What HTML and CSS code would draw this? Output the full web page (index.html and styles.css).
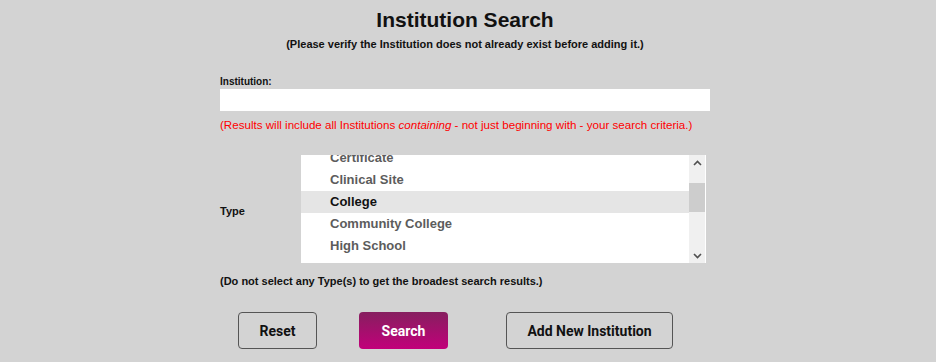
FILE: index.html
```html
<!DOCTYPE html>
<html lang="en">
<head>
    <meta charset="UTF-8">
    <meta name="viewport" content="width=device-width, initial-scale=1.0">
    <title>Institution Search</title>
    <link rel="stylesheet" href="styles.css">
</head>
<body>
    <div class="search-page">
        <h1 class="title">Institution Search</h1>
        <div class="subtitle">(Please verify the Institution does not already exist before adding it.)</div>

        <form id="searchForm">
            <label class="field-label" for="institution">Institution:</label>
            <input class="text-input" id="institution" type="text">
            <div class="hint-red">(Results will include all Institutions <i>containing</i> - not just beginning with - your search criteria.)</div>

            <div class="type-row">
                <div class="type-label">Type</div>
                <div class="listbox">
                    <div class="list-view" id="typeList">
                        <div class="option">Associate</div>
                        <div class="option">Business School</div>
                        <div class="option">Certificate</div>
                        <div class="option">Clinical Site</div>
                        <div class="option selected">College</div>
                        <div class="option">Community College</div>
                        <div class="option">High School</div>
                        <div class="option">Junior College</div>
                        <div class="option">Medical School</div>
                        <div class="option">Other</div>
                        <div class="option">Technical School</div>
                        <div class="option">University</div>
                        <div class="option">Vocational School</div>
                    </div>
                    <div class="scrollbar">
                        <div class="scroll-btn">
                            <svg width="9" height="6" viewBox="0 0 9 6"><path d="M1 5 L4.5 1.5 L8 5" fill="none" stroke="#505050" stroke-width="1.6"/></svg>
                        </div>
                        <div class="scroll-track">
                            <div class="scroll-thumb"></div>
                        </div>
                        <div class="scroll-btn">
                            <svg width="9" height="6" viewBox="0 0 9 6"><path d="M1 1 L4.5 4.5 L8 1" fill="none" stroke="#505050" stroke-width="1.6"/></svg>
                        </div>
                    </div>
                </div>
            </div>
            <div class="hint">(Do not select any Type(s) to get the broadest search results.)</div>

            <div class="buttons">
                <button class="btn btn-reset" type="reset">Reset</button>
                <button class="btn btn-search" type="submit">Search</button>
                <button class="btn btn-add" type="button">Add New Institution</button>
            </div>
        </form>
    </div>
    <script src="script.js"></script>
</body>
</html>
```

FILE: styles.css
```css
body {
    margin: 0;
    padding-right: 6px;
    background: #d3d3d3;
    font-family: "Liberation Sans", Arial, sans-serif;
    color: #111;
}

.search-page {
    width: 490px;
    margin: 0 auto;
}

.title {
    margin: 0;
    padding-top: 8px;
    font-size: 21px;
    line-height: 24px;
    text-align: center;
}

.subtitle {
    margin-top: 5px;
    font-size: 11px;
    font-weight: bold;
    line-height: 14px;
    text-align: center;
}

.field-label {
    display: block;
    margin-top: 24px;
    font-size: 10px;
    font-weight: bold;
    line-height: 14px;
}

.text-input {
    display: block;
    box-sizing: border-box;
    width: 490px;
    height: 22px;
    border: none;
    background: #fff;
}

.text-input:focus {
    outline: none;
}

.hint-red {
    margin-top: 7px;
    font-size: 11.6px;
    line-height: 14px;
    color: #f00;
}

.type-row {
    display: flex;
    align-items: center;
    margin-top: 23px;
}

.type-label {
    width: 81px;
    padding-top: 3px;
    font-size: 11px;
    font-weight: bold;
}

.listbox {
    display: flex;
    width: 405px;
    height: 108px;
    background: #fff;
}

.list-view {
    flex: 1;
    overflow: hidden;
}

.option {
    height: 22px;
    line-height: 21px;
    padding-left: 29px;
    font-size: 13px;
    font-weight: bold;
    color: #5c5c5c;
    white-space: nowrap;
}

.option.selected {
    background: #e5e5e5;
    color: #111;
}

.scrollbar {
    display: flex;
    flex-direction: column;
    width: 16px;
    margin-right: 1px;
    background: #f0f0f0;
}

.scroll-btn {
    display: flex;
    align-items: center;
    justify-content: center;
    height: 15px;
}

.scroll-track {
    flex: 1;
    padding-top: 13px;
}

.scroll-thumb {
    height: 29px;
    background: #cdcdcd;
}

.hint {
    margin-top: 11px;
    font-size: 11px;
    font-weight: bold;
    line-height: 14px;
}

.buttons {
    display: flex;
    margin-top: 24px;
    padding-left: 18px;
}

.btn {
    height: 37px;
    border: 1px solid #555;
    border-radius: 4px;
    background: transparent;
    font-family: Roboto, "Liberation Sans", sans-serif;
    font-size: 14px;
    font-weight: bold;
    color: #111;
    cursor: pointer;
}

.btn-reset {
    width: 79px;
}

.btn-search {
    width: 89px;
    margin-left: 42px;
    border: none;
    background: linear-gradient(to bottom, #861f5f, #c2007a);
    color: #fff;
}

.btn-add {
    width: 167px;
    margin-left: 58px;
}
```

FILE: script.js
```js
// keep the list scrolled so the selected type shows
document.getElementById("typeList").scrollTop = 52;
```
